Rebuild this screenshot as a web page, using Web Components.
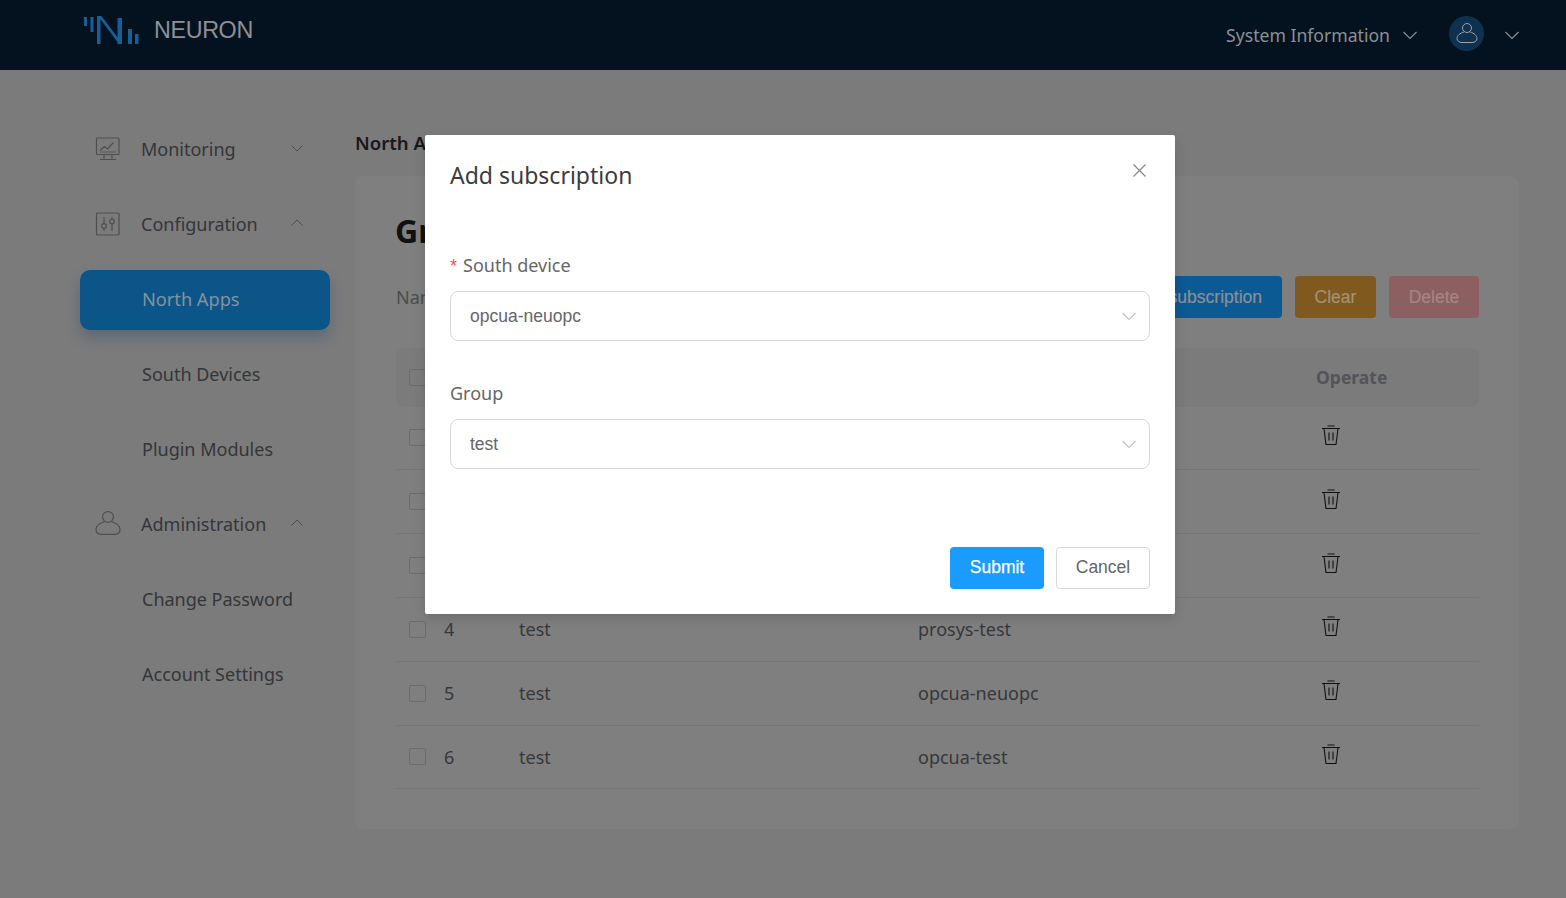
<!DOCTYPE html>
<html lang="en">
<head>
<meta charset="utf-8">
<title>Neuron</title>
<style>
html, body { margin: 0; height: 100%; }
body { background: #f6f7f8; font-family: "Noto Sans", "Open Sans", sans-serif; overflow: hidden; }
</style>
</head>
<body>
<app-header></app-header>
<app-shell>
    <side-nav slot="nav">
        <nav-item icon="monitor" arrow="down">Monitoring</nav-item>
        <nav-item icon="sliders" arrow="up">Configuration</nav-item>
        <nav-item active>North Apps</nav-item>
        <nav-item>South Devices</nav-item>
        <nav-item>Plugin Modules</nav-item>
        <nav-item icon="user" arrow="up">Administration</nav-item>
        <nav-item>Change Password</nav-item>
        <nav-item>Account Settings</nav-item>
    </side-nav>
    <group-card crumb="North Apps" heading="Group List">
        <group-row head></group-row>
        <group-row></group-row>
        <group-row></group-row>
        <group-row></group-row>
        <group-row index="4" name="test" device="prosys-test"></group-row>
        <group-row index="5" name="test" device="opcua-neuopc"></group-row>
        <group-row index="6" name="test" device="opcua-test"></group-row>
    </group-card>
</app-shell>
<modal-dialog heading="Add subscription">
    <select-field label="South device" value="opcua-neuopc" required></select-field>
    <select-field label="Group" value="test"></select-field>
</modal-dialog>

<script>
const chevron = (dir, size = 14) => `<svg width="${size}" height="${size}" viewBox="0 0 14 14" fill="none" stroke="currentColor" stroke-width="1.15"><path d="${dir === 'up' ? 'M.5 10 7 3.5l6.5 6.5' : 'M.5 4 7 10.5 13.5 4'}"/></svg>`;
const userIcon = (w, h) => `<svg width="${w}" height="${h}" viewBox="0 0 26 24" fill="none" stroke="currentColor" stroke-width="1.2"><circle cx="13" cy="6" r="5.4"/><path d="M9.200 10.800C4.500 12.300 1 15 1 18.500 1 21.500 3.500 23.400 7 23.400h12c3.500 0 6-1.900 6-4.900 0-3.500-3.500-6.200-8.200-7.700"/></svg>`;
const icons = {
    monitor: `<svg width="26" height="26" viewBox="0 0 26 26" fill="none" stroke="currentColor" stroke-width="1.2"><rect x="1.500" y="2" width="22.500" height="16.500" rx="1"/><path d="M5 14.500 9.500 10.500l3 2.500 6-6.500"/><path d="M5 16h16" stroke-width=".8"/><path d="M9 18.500v4M17 18.500v4M5 23.500h16"/></svg>`,
    sliders: `<svg width="26" height="26" viewBox="0 0 26 26" fill="none" stroke="currentColor" stroke-width="1.2"><rect x="1.500" y="2" width="22.500" height="22" rx="1"/><circle cx="9" cy="15" r="2.400"/><circle cx="17" cy="10.500" r="2.400"/><path d="M9 6v6.600M9 17.400V20M17 6v2.100M17 12.900V20"/></svg>`,
    user: userIcon(26, 24)
};

// Header sits above the mask: its colours are given as photographed
class AppHeader extends HTMLElement {
    constructor() {
        super();
        this.attachShadow({ mode: "open" }).innerHTML = `
<style>
:host { display: flex; align-items: center; height: 70px; background: #04121f; color: #8d9094; padding: 0 47px 0 84px; box-sizing: border-box; position: relative; z-index: 20; }
.logo { display: flex; align-items: center; gap: 14px; margin-top: -10px; flex: 1; }
.name { font: 23.300px "Liberation Sans", sans-serif; letter-spacing: -.35px; }
.info { display: flex; align-items: center; gap: 13px; font-size: 17.600px; margin-right: 32px; }
.avatar { width: 35px; height: 35px; border-radius: 50%; background: #0e3150; color: #a0a3a6; display: flex; align-items: center; justify-content: center; margin-right: 21px; margin-top: -4px; }
svg { display: block; }
</style>
<div class="logo">
    <svg width="56" height="30" viewBox="0 0 56 30" fill="#175f98">
        <rect x="0" y="2" width="3" height="9"/><rect x="6.500" y="2" width="3" height="15"/>
        <path d="M13 1h3.500v28H13zM14 1h3.500l21 28H35zM33.500 3H38v26h-4.500z"/>
        <rect x="44" y="14" width="4" height="15"/><rect x="51" y="19" width="3.500" height="10"/>
    </svg>
    <span class="name">NEURON</span>
</div>
<div class="info"><span>System Information</span>${chevron('down')}</div>
<div class="avatar">${userIcon(22, 20)}</div>
${chevron('down')}`;
    }
}
customElements.define("app-header", AppHeader);

class AppShell extends HTMLElement {
    constructor() {
        super();
        this.attachShadow({ mode: "open" }).innerHTML = `
<style>
:host { display: grid; grid-template-columns: 250px 1164px; column-gap: 25px; padding: 42px 0 0 80px; }
</style>
<slot name="nav"></slot>
<slot></slot>`;
    }
}
customElements.define("app-shell", AppShell);

class SideNav extends HTMLElement {
    constructor() {
        super();
        this.attachShadow({ mode: "open" }).innerHTML = `
<style>
:host { display: flex; flex-direction: column; gap: 15px; padding-top: 8px; }
</style>
<slot></slot>`;
    }
}
customElements.define("side-nav", SideNav);

class NavItem extends HTMLElement {
    connectedCallback() {
        if (this.shadowRoot) return;
        const icon = this.getAttribute("icon");
        const arrow = this.getAttribute("arrow");
        this.attachShadow({ mode: "open" }).innerHTML = `
<style>
:host { display: flex; align-items: center; height: 60px; font-size: 18px; color: #6a6c72; padding: 0 0 2px 62px; box-sizing: border-box; border-radius: 10px; position: relative; }
:host([active]) { background: #0b5589; color: #86919b; font-size: 18.200px; box-shadow: 0 8px 14px rgba(11,60,100,.28); z-index: 20; }
:host([icon]) { padding-left: 61px; }
.icon { position: absolute; left: 15px; top: 16px; color: #9c9da0; }
.arrow { position: absolute; left: 211px; top: 22px; color: #9c9da0; }
svg { display: block; }
</style>
${icon ? `<span class="icon">${icons[icon]}</span>` : ""}
<slot></slot>
${arrow ? `<span class="arrow">${chevron(arrow, 12)}</span>` : ""}`;
    }
}
customElements.define("nav-item", NavItem);

class GroupCard extends HTMLElement {
    connectedCallback() {
        if (this.shadowRoot) return;
        this.attachShadow({ mode: "open" }).innerHTML = `
<style>
:host { display: block; }
.crumb { font-size: 18.600px; font-weight: 600; color: #333; line-height: 22px; margin: 20px 0 22px; }
.card { background: #fff; border-radius: 10px; padding: 31px 40px 40px 41px; height: 653px; box-sizing: border-box; }
h2 { margin: 0 0 21px -1px; font-size: 32px; line-height: 48px; font-weight: 700; color: #222; }
.bar { display: flex; align-items: center; justify-content: space-between; height: 42px; margin-bottom: 30px; font-size: 18px; color: #999; }
.btns { display: flex; gap: 13px; }
.btn { height: 42px; display: flex; align-items: center; justify-content: center; border-radius: 4px; font: 17.500px "Liberation Sans", sans-serif; -webkit-text-stroke: .2px; position: relative; z-index: 20; }
.add { background: #0b5a94; color: #8d9094; padding: 0 20px 0 21px; }
.clear { background: #80591f; color: #a09274; width: 81px; }
.del { background: #8c5f61; color: #a68486; width: 90px; }
</style>
<div class="crumb">${this.getAttribute("crumb")}</div>
<div class="card">
    <h2>${this.getAttribute("heading")}</h2>
    <div class="bar">
        <span>Name</span>
        <div class="btns">
            <span class="btn add">Add subscription</span>
            <span class="btn clear">Clear</span>
            <span class="btn del">Delete</span>
        </div>
    </div>
    <slot></slot>
</div>`;
    }
}
customElements.define("group-card", GroupCard);

class GroupRow extends HTMLElement {
    connectedCallback() {
        if (this.shadowRoot) return;
        const head = this.hasAttribute("head");
        this.attachShadow({ mode: "open" }).innerHTML = `
<style>
:host { display: grid; grid-template-columns: 35px 75px 399px 398px 1fr; align-items: center; height: 63.800px; box-sizing: border-box; font-size: 18px; color: #6e7076; border-bottom: 1px solid #ececec; padding-left: 13px; }
:host([head]) { height: 58.600px; background: #f7f7f8; border: 0; border-radius: 8px; font-weight: 700; font-size: 17.500px; color: #a6a9b0; }
.check { width: 15px; height: 15px; border: 1px solid #d9d9d9; border-radius: 2px; }
.trash { margin: -6px 0 0 5px; color: #222; display: block; }
</style>
<span class="check"></span>
<span>${this.getAttribute("index") || ""}</span>
<span>${this.getAttribute("name") || ""}</span>
<span>${this.getAttribute("device") || ""}</span>
<span>${head ? "Operate" : `<svg class="trash" width="20" height="20" viewBox="0 0 20 20" fill="none" stroke="currentColor" stroke-width="1.100"><path d="M6.500 1h7M1 3.500h18M3 4l2 15.500h10L17 4M8 7.500v8M12 7.500v8"/></svg>`}</span>`;
    }
}
customElements.define("group-row", GroupRow);

class SelectField extends HTMLElement {
    connectedCallback() {
        if (this.shadowRoot) return;
        this.attachShadow({ mode: "open" }).innerHTML = `
<style>
:host { display: block; margin-bottom: 40px; }
label { display: block; font-size: 18px; color: #666; line-height: 26px; margin-bottom: 12px; }
:host(:not([required])) label { margin-top: -1px; margin-bottom: 13px; }
.req { color: #ff4d4f; font-family: "Liberation Sans", sans-serif; margin-right: 6px; }
.box { height: 50px; box-sizing: border-box; border: 1px solid #d9d9d9; border-radius: 8px; display: flex; align-items: center; justify-content: space-between; padding: 0 13px 0 19px; font: 17.500px "Liberation Sans", sans-serif; color: #666; }
.box span { color: #c0c0c0; display: block; }
svg { display: block; }
</style>
<label>${this.hasAttribute("required") ? '<span class="req">*</span>' : ""}${this.getAttribute("label")}</label>
<div class="box">${this.getAttribute("value")}<span>${chevron('down')}</span></div>`;
    }
}
customElements.define("select-field", SelectField);

class ModalDialog extends HTMLElement {
    connectedCallback() {
        if (this.shadowRoot) return;
        this.attachShadow({ mode: "open" }).innerHTML = `
<style>
:host { position: absolute; inset: 0; }
.mask { position: absolute; inset: 0; background: rgba(0,0,0,.5); z-index: 10; }
.dialog { position: absolute; left: 425px; top: 135px; width: 750px; height: 479px; background: #fff; border-radius: 2px; padding: 0 25px; box-sizing: border-box; box-shadow: 0 4px 12px rgba(0,0,0,.15); z-index: 30; }
h3 { margin: 0; padding-top: 20px; font-size: 23px; line-height: 40px; font-weight: 400; color: #3c3c3c; height: 117px; box-sizing: border-box; }
.close { position: absolute; left: 707px; top: 28px; color: #888; display: block; }
.foot { position: absolute; right: 25px; bottom: 25px; display: flex; gap: 12px; }
button { width: 94px; height: 42px; border-radius: 4px; font: 17.500px "Liberation Sans", sans-serif; padding: 0 0 2px; }
.ok { background: #1a9bff; border: 0; color: #fff; -webkit-text-stroke: .25px; }
.cancel { background: #fff; border: 1px solid #d9d9d9; color: #666; }
</style>
<div class="mask"></div>
<div class="dialog">
    <h3>${this.getAttribute("heading")}</h3>
    <svg class="close" width="15" height="15" viewBox="0 0 15 15" stroke="currentColor" stroke-width="1.200"><path d="M1.500 1.500l12 12M13.500 1.500l-12 12"/></svg>
    <slot></slot>
    <div class="foot">
        <button class="ok">Submit</button>
        <button class="cancel">Cancel</button>
    </div>
</div>`;
    }
}
customElements.define("modal-dialog", ModalDialog);
</script>
</body>
</html>
